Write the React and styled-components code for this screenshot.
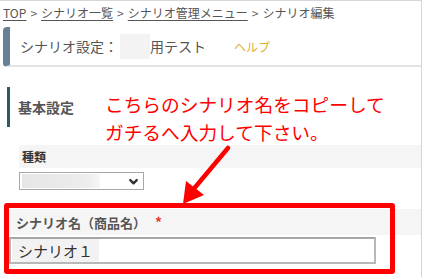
import React from 'react';
import styled, { createGlobalStyle } from 'styled-components';

const GlobalStyle = createGlobalStyle`
  html, body {
    margin: 0;
    padding: 0;
    background: #fff;
  }
  body {
    font-family: "Noto Sans CJK JP", "Noto Sans", sans-serif;
    color: #555;
  }
`;

const App = () => {
  return (
    <>
      <GlobalStyle />
      <Page>
        <Breadcrumb>
          <Crumb href="#">TOP</Crumb>
          <Sep>&gt;</Sep>
          <Crumb href="#">シナリオ一覧</Crumb>
          <Sep>&gt;</Sep>
          <Crumb href="#">シナリオ管理メニュー</Crumb>
          <Sep>&gt;</Sep>
          <span>シナリオ編集</span>
        </Breadcrumb>

        <Header>
          <Title>
            シナリオ設定：<Redacted />用テスト
          </Title>
          <HelpLink href="#">ヘルプ</HelpLink>
        </Header>

        <SectionHead>
          <SectionTitle>基本設定</SectionTitle>
        </SectionHead>

        <Field>
          <LabelBand>
            <Label>種類</Label>
          </LabelBand>
          <Select>
            <SelectValue />
            <Chevron viewBox="0 0 12 12">
              <path d="M2.5 4.5 L6 8 L9.5 4.5" fill="none" stroke="#333" strokeWidth="2.6" strokeLinecap="round" strokeLinejoin="round" />
            </Chevron>
          </Select>
        </Field>

        <NameField>
          <LabelBand $wide>
            <Label $big>
              シナリオ名（商品名）<Required>*</Required>
            </Label>
          </LabelBand>
          <TextInput>
            <InputValue>シナリオ１</InputValue>
          </TextInput>
          <RedFrame />
        </NameField>

        <Note>
          こちらのシナリオ名をコピーして
          <br />
          ガチるへ入力して下さい。
        </Note>

        <Arrow viewBox="0 0 422 277">
          <line x1="228" y1="147" x2="192" y2="190" stroke="#f00" strokeWidth="4.5" strokeLinecap="round" />
          <polygon points="183,203 186,180 204,194" fill="#f00" />
        </Arrow>
      </Page>
    </>
  );
};

export default App;

const Page = styled.div`
  position: relative;
  width: 422px;
  height: 277px;
  box-sizing: border-box;
  border-top: 1px solid #d6d6d6;
  border-right: 1px solid #d6d6d6;
  overflow: hidden;
`;

const Breadcrumb = styled.div`
  display: flex;
  align-items: center;
  height: 22px;
  padding-left: 3px;
  padding-bottom: 4px;
  font-size: 12px;
  color: #555;
  white-space: nowrap;
`;

const Crumb = styled.a`
  color: #555;
  text-decoration: underline;
  text-underline-offset: 2px;
`;

const Sep = styled.span`
  margin: 0 4px;
  color: #666;
`;

const Header = styled.div`
  display: flex;
  align-items: center;
  height: 40px;
  margin-left: 3px;
  box-sizing: border-box;
  border-left: 7px solid #687f95;
  border-bottom: 2px solid #e3e3e3;
  border-radius: 4px 0 0 4px;
  padding-left: 10px;
`;

const Title = styled.div`
  display: flex;
  align-items: center;
  font-size: 14px;
  color: #555;
`;

const Redacted = styled.span`
  display: inline-block;
  width: 30px;
  height: 25px;
  margin-left: 2px;
  background: #f3f3f3;
`;

const HelpLink = styled.a`
  margin-left: 28px;
  font-size: 12px;
  color: #e2b03a;
  text-decoration: none;
`;

const SectionHead = styled.div`
  display: flex;
  align-items: center;
  height: 40px;
  margin: 20px 0 0 7px;
  border-left: 3px solid #31586a;
  padding-left: 8px;
`;

const SectionTitle = styled.div`
  font-size: 14px;
  font-weight: 700;
  color: #555;
`;

const Field = styled.div`
  margin: 18px 0 0 19px;
`;

const LabelBand = styled.div`
  display: flex;
  align-items: center;
  height: ${(p) => (p.$wide ? '26px' : '23px')};
  padding-left: ${(p) => (p.$wide ? '7px' : '3px')};
  background: #f5f5f5;
`;

const Label = styled.div`
  font-size: ${(p) => (p.$big ? '13px' : '12px')};
  font-weight: 700;
  color: ${(p) => (p.$big ? '#555' : '#333')};
`;

const Required = styled.span`
  margin-left: 9px;
  color: #e8382c;
  font-size: 14px;
`;

const Select = styled.div`
  display: flex;
  align-items: center;
  justify-content: space-between;
  width: 125px;
  height: 18px;
  margin-top: 4px;
  box-sizing: border-box;
  border: 1px solid #a8a8a8;
  padding: 0 4px 0 2px;
  background: #fff;
`;

const SelectValue = styled.span`
  width: 78px;
  height: 14px;
  background: linear-gradient(90deg, #e6e6e6, #ececec 80%, #f6f6f6);
`;

const Chevron = styled.svg`
  width: 11px;
  height: 11px;
`;

const NameField = styled.div`
  position: relative;
  margin: 13px 0 0 4px;
  padding: 6px 0 10px 5px;
`;

const TextInput = styled.div`
  display: flex;
  align-items: center;
  width: 367px;
  height: 27px;
  margin-top: 2px;
  box-sizing: border-box;
  border: 2px solid #b8b8b8;
  border-top-color: #a6a6a6;
  padding-left: 1px;
  background: #fff;
`;

const InputValue = styled.span`
  display: flex;
  align-items: center;
  height: 23px;
  padding: 0 6px 0 6px;
  font-size: 15px;
  color: #333;
  background: #f2f2f2;
`;

const RedFrame = styled.div`
  position: absolute;
  left: 0;
  top: 0;
  width: 391px;
  height: 71px;
  box-sizing: border-box;
  border: 5px solid #f00;
  border-radius: 3px;
  pointer-events: none;
`;

const Note = styled.div`
  position: absolute;
  left: 105px;
  top: 89px;
  font-size: 18.7px;
  line-height: 28px;
  color: #f00;
  white-space: nowrap;
`;

const Arrow = styled.svg`
  position: absolute;
  left: 0;
  top: 0;
  width: 422px;
  height: 277px;
  pointer-events: none;
`;
